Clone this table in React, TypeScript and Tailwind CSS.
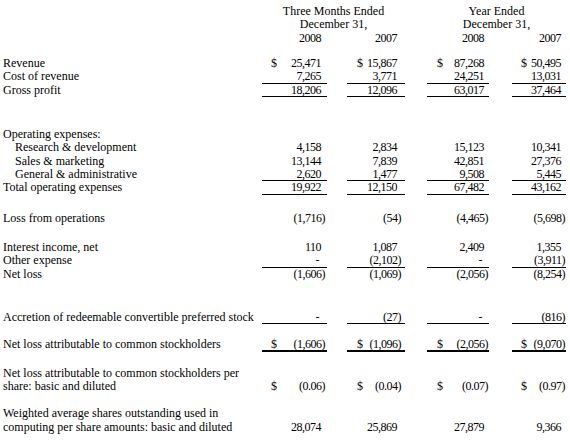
import React from 'react';

type Row = {
  label: string;
  mt?: string;
  indent?: boolean;
  dollar?: boolean;
  vals?: string[];
  line?: 'single' | 'double';
};

const rows: Row[] = [
  { label: 'Revenue', mt: 'mt-[12px]', dollar: true, vals: ['25,471', '15,867', '87,268', '50,495'] },
  { label: 'Cost of revenue', vals: ['7,265', '3,771', '24,251', '13,031'], line: 'single' },
  { label: 'Gross profit', vals: ['18,206', '12,096', '63,017', '37,464'], line: 'single' },
  { label: 'Operating expenses:', mt: 'mt-[31px]' },
  { label: 'Research & development', indent: true, vals: ['4,158', '2,834', '15,123', '10,341'] },
  { label: 'Sales & marketing', indent: true, vals: ['13,144', '7,839', '42,851', '27,376'] },
  { label: 'General & administrative', indent: true, vals: ['2,620', '1,477', '9,508', '5,445'], line: 'single' },
  { label: 'Total operating expenses', vals: ['19,922', '12,150', '67,482', '43,162'], line: 'single' },
  { label: 'Loss from operations', mt: 'mt-[17px]', vals: ['(1,716)', '(54)', '(4,465)', '(5,698)'] },
  { label: 'Interest income, net', mt: 'mt-[16px]', vals: ['110', '1,087', '2,409', '1,355'] },
  { label: 'Other expense', vals: ['-', '(2,102)', '-', '(3,911)'], line: 'single' },
  { label: 'Net loss', vals: ['(1,606)', '(1,069)', '(2,056)', '(8,254)'] },
  { label: 'Accretion of redeemable convertible preferred stock', mt: 'mt-[30px]', vals: ['-', '(27)', '-', '(816)'], line: 'single' },
  { label: 'Net loss attributable to common stockholders', mt: 'mt-[14px]', dollar: true, vals: ['(1,606)', '(1,096)', '(2,056)', '(9,070)'], line: 'double' },
  { label: 'Net loss attributable to common stockholders per', mt: 'mt-[15px]' },
  { label: 'share: basic and diluted', dollar: true, vals: ['(0.06)', '(0.04)', '(0.07)', '(0.97)'] },
  { label: 'Weighted average shares outstanding used in', mt: 'mt-[14px]' },
  { label: 'computing per share amounts: basic and diluted', vals: ['28,074', '25,869', '27,879', '9,366'] },
];

// column boxes: 262-327, 347-405, 427-489, 512-566
const colCls = ['w-[65px]', 'ml-[20px] w-[58px]', 'ml-[22px] w-[62px]', 'ml-[23px] w-[54px]'];
const dollarCls = ['pl-[9px]', 'pl-[10px]', 'pl-[10px]', 'pl-[9px]'];
const numCls = ['pr-[6px]', 'pr-[8px]', 'pr-[5px]', 'pr-[5px]'];

function Num({ v }: { v: string }) {
  if (v === '-') return <span className="mr-[2px]">-</span>;
  if (v.startsWith('(')) {
    return (
      <span>
        {v.slice(0, -1)}
        <span className="-mr-[4px]">)</span>
      </span>
    );
  }
  return <span>{v}</span>;
}

function Cell({ i, v, dollar, line }: { i: number; v: string; dollar?: boolean; line?: Row['line'] }) {
  const border = line === 'single' ? 'border-b border-black' : line === 'double' ? 'border-b-[2px] border-black' : '';
  return (
    <div className={`${colCls[i]} ${border} flex h-[13.33px] shrink-0 justify-between`}>
      <span className={dollarCls[i]}>{dollar ? '$' : ''}</span>
      <span className={`${numCls[i]} text-right tracking-[-0.5px]`}>
        <Num v={v} />
      </span>
    </div>
  );
}

export default function App() {
  return (
    <div className="h-[448px] w-[570px] overflow-hidden bg-white font-['Liberation_Serif',serif] text-[12px] leading-[13.33px] text-black">
      {/* header */}
      <div className="mt-[5px] flex h-[13.33px]">
        <div className="w-[262px] shrink-0" />
        <div className="w-[143px] text-center">Three Months Ended</div>
        <div className="ml-[22px] w-[139px] text-center">Year Ended</div>
      </div>
      <div className="flex h-[13.33px]">
        <div className="w-[262px] shrink-0" />
        <div className="w-[143px] text-center">December 31,</div>
        <div className="ml-[22px] w-[139px] text-center">December 31,</div>
      </div>
      <div className="flex h-[13.33px]">
        <div className="w-[262px] shrink-0" />
        {['2008', '2007', '2008', '2007'].map((y, i) => (
          <div key={i} className={`${colCls[i]} ${numCls[i]} shrink-0 text-right tracking-[-0.5px]`}>{y}</div>
        ))}
      </div>

      {rows.map((r, idx) => (
        <div key={idx} className={`flex h-[13.33px] ${r.mt ?? ''}`}>
          <div className={`w-[262px] shrink-0 whitespace-nowrap ${r.indent ? 'pl-[15px]' : 'pl-[3px]'}`}>{r.label}</div>
          {r.vals?.map((v, i) => (
            <Cell key={i} i={i} v={v} dollar={r.dollar} line={r.line} />
          ))}
        </div>
      ))}
    </div>
  );
}
